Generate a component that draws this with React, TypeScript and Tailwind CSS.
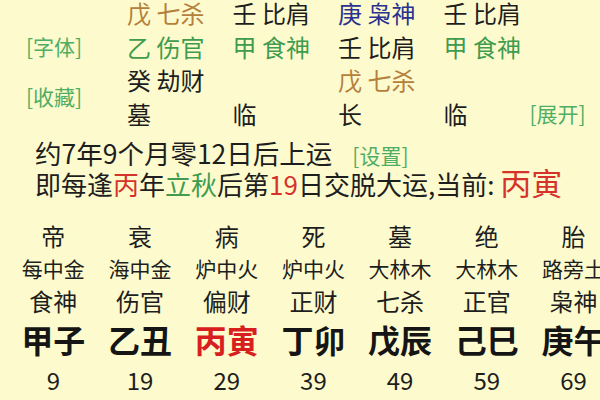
import React from 'react';

type Cell = { text: string; color: string } | null;

const brown = 'text-[#b5803c]';
const green = 'text-[#3f9c4e]';
const blue = 'text-[#2b3190]';
const dark = 'text-[#1e1e1e]';

const topRows: Cell[][] = [
  [
    { text: '戊 七杀', color: brown },
    { text: '壬 比肩', color: dark },
    { text: '庚 枭神', color: blue },
    { text: '壬 比肩', color: dark },
  ],
  [
    { text: '乙 伤官', color: green },
    { text: '甲 食神', color: green },
    { text: '壬 比肩', color: dark },
    { text: '甲 食神', color: green },
  ],
  [{ text: '癸 劫财', color: dark }, null, { text: '戊 七杀', color: brown }, null],
  [
    { text: '墓', color: dark },
    { text: '临', color: dark },
    { text: '长', color: dark },
    { text: '临', color: dark },
  ],
];

const luck = [
  { stage: '帝', nayin: '每中金', god: '食神', pillar: '甲子', age: '9' },
  { stage: '衰', nayin: '海中金', god: '伤官', pillar: '乙丑', age: '19' },
  { stage: '病', nayin: '炉中火', god: '偏财', pillar: '丙寅', age: '29', current: true },
  { stage: '死', nayin: '炉中火', god: '正财', pillar: '丁卯', age: '39' },
  { stage: '墓', nayin: '大林木', god: '七杀', pillar: '戊辰', age: '49' },
  { stage: '绝', nayin: '大林木', god: '正官', pillar: '己巳', age: '59' },
  { stage: '胎', nayin: '路旁土', god: '枭神', pillar: '庚午', age: '69' },
];

const App: React.FC = () => {
  return (
    <div className="w-[600px] h-[400px] overflow-hidden bg-[#fdfbcd] text-[#1e1e1e] font-['Noto_Sans_CJK_SC','Noto_Sans',sans-serif]">
      <div className="grid grid-cols-[127px_105.5px_105.5px_105.5px_86px_1fr] grid-rows-[repeat(4,33.5px)] -mt-[4px] text-[24px] leading-[33.5px]">
        <div className="col-start-1 row-start-2 pl-[26px] text-[21px] text-[#4fae66]">[字体]</div>
        <div className="col-start-1 row-start-3 row-span-2 self-center pl-[26px] text-[21px] text-[#4fae66]">[收藏]</div>
        {topRows.map((row, r) =>
          row.map((cell, c) =>
            cell ? (
              <div
                key={`${r}-${c}`}
                className={`whitespace-nowrap ${cell.color}`}
                style={{ gridRow: r + 1, gridColumn: c + 2 }}
              >
                {cell.text}
              </div>
            ) : null
          )
        )}
        <div className="col-start-6 row-start-4 text-[21px] text-[#4fae66]">[展开]</div>
      </div>

      <div className="mt-[8px] pl-[35px] h-[29px] leading-[29px] text-[26.5px] whitespace-nowrap">
        约7年9个月零12日后上运
        <span className="ml-[20px] text-[21px] text-[#4fae66]">[设置]</span>
      </div>
      <div className="pl-[35px] h-[29px] leading-[29px] text-[26px] whitespace-nowrap">
        即每逢<span className="text-[#d6322c]">丙</span>年<span className="text-[#3f9c4e]">立秋</span>后第
        <span className="text-[#d6322c]">19</span>日交脱大运,当前:{' '}
        <span className="text-[31px] text-[#d6322c]">丙寅</span>
      </div>

      <div className="mt-[24px] pl-[10px] flex">
        {luck.map((l) => (
          <div key={l.age} className="w-[86.7px] shrink-0 flex flex-col items-center whitespace-nowrap">
            <div className="h-[32px] leading-[32px] text-[24px]">{l.stage}</div>
            <div className="h-[32px] leading-[32px] text-[21px]">{l.nayin}</div>
            <div className="h-[33px] leading-[33px] text-[24px]">{l.god}</div>
            <div
              className={`h-[44px] leading-[44px] text-[32px] font-bold ${l.current ? 'text-[#d81f1f]' : 'text-[#151515]'}`}
            >
              {l.pillar}
            </div>
            <div className="h-[38px] leading-[38px] text-[24px]">{l.age}</div>
          </div>
        ))}
      </div>
    </div>
  );
};

export default App;
